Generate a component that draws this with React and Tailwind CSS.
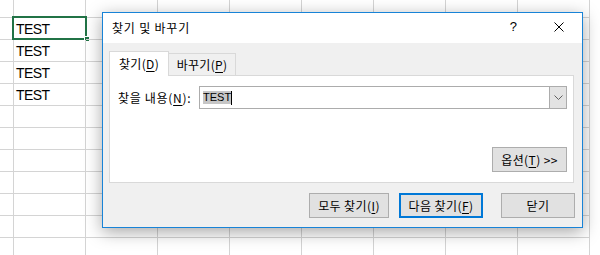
import React from "react";

const KR = { fontFamily: '"Noto Sans CJK KR", "Noto Sans", sans-serif' };

function U({ children }) {
  return <span className="underline underline-offset-[2px] decoration-[1px]">{children}</span>;
}

function Grid() {
  const rows = Array.from({ length: 12 }, (_, i) => i);
  const cols = Array.from({ length: 9 }, (_, i) => i);
  return (
    <div className="flex flex-col bg-white" style={{ fontFamily: '"Liberation Sans", Arial, sans-serif' }}>
      {rows.map((r) => (
        <div key={r} className={`flex ${r === 0 ? "h-[18px]" : "h-[22px]"}`}>
          {cols.map((c) => (
            <div
              key={c}
              className={`relative shrink-0 border-r border-b border-[#d4d4d4] ${c === 0 ? "w-[14px]" : "w-[72px]"} flex items-end pl-[2px] pb-[2px]`}
            >
              {c === 1 && r >= 1 && r <= 4 && (
                <span className="text-[14px] leading-[16px] tracking-[-0.6px] text-black">TEST</span>
              )}
              {c === 1 && r === 1 && (
                <>
                  <div className="absolute -left-[2px] -top-[2px] w-[75px] h-[24px] border-2 border-[#217346] pointer-events-none" />
                  <div className="absolute left-[70px] top-[18px] w-[6px] h-[6px] bg-[#217346] border border-white" />
                </>
              )}
            </div>
          ))}
        </div>
      ))}
    </div>
  );
}

function Btn({ w, primary, children }) {
  return (
    <div
      className={`h-[25px] ${w} flex items-center justify-center bg-[#e1e1e1] text-[12px] leading-[16px] tracking-[0.4px] text-black ${
        primary ? "border-2 border-[#0078d7]" : "border border-[#adadad]"
      }`}
      style={KR}
    >
      {children}
    </div>
  );
}

export default function App() {
  return (
    <div className="relative w-[600px] h-[255px] overflow-hidden bg-white">
      <Grid />
      <div
        className="absolute left-[102px] top-[12px] w-[481px] h-[216px] border border-[#1883d7] flex flex-col shadow-[0_4px_16px_rgba(0,0,0,0.35)]"
        style={KR}
      >
        {/* title bar */}
        <div className="h-[30px] bg-white flex items-center">
          <span className="pl-[9px] text-[12px] leading-[16px] tracking-[0.8px] text-black">찾기 및 바꾸기</span>
          <span
            className="ml-auto mr-[37px] text-[13px] leading-[16px] text-black -mt-[2px]"
            style={{ fontFamily: '"Liberation Sans", Arial, sans-serif' }}
          >
            ?
          </span>
          <svg width="10" height="10" viewBox="0 0 10 10" className="mr-[18px] -mt-[2px]">
            <path d="M0.5 0.5 L9.5 9.5 M9.5 0.5 L0.5 9.5" stroke="#000" strokeWidth="1" />
          </svg>
        </div>
        {/* body */}
        <div className="flex-1 bg-[#f0f0f0] pt-[8px] pl-[6px] pr-[8px] flex flex-col">
          {/* tabs */}
          <div className="flex items-end">
            <div className="relative z-10 -mb-px h-[25px] w-[60px] bg-white border-t border-l border-r border-[#d9d9d9] flex items-center justify-center text-[12px] leading-[16px] tracking-[0.3px] text-black pb-[1px]">
              찾기(<U>D</U>)
            </div>
            <div className="h-[22px] w-[67px] bg-[#f0f0f0] border-t border-r border-[#d9d9d9] flex items-center justify-center text-[12px] leading-[16px] tracking-[0.3px] text-black">
              바꾸기(<U>P</U>)
            </div>
          </div>
          {/* panel */}
          <div className="w-[465px] h-[108px] bg-white border border-[#d9d9d9] pt-[10px] pl-[8px] pr-[6px] flex flex-col">
            <div className="flex items-center">
              <span className="w-[81px] shrink-0 text-[12px] leading-[16px] tracking-[0.7px] text-black">
                찾을 내용(<U>N</U>):
              </span>
              <div className="flex-1 h-[23px] border border-[#acacac] bg-white flex items-stretch">
                <div className="flex-1 flex items-center pl-[3px]">
                  <span
                    className="bg-[#c6c6c6] text-[11px] leading-[13px] text-black"
                    style={{ fontFamily: '"Liberation Sans", Arial, sans-serif' }}
                  >
                    TEST
                  </span>
                  <span className="w-px h-[14px] bg-black" />
                </div>
                <div className="w-[17px] border-l border-[#acacac] bg-[#e3e3e3] flex items-center justify-center">
                  <svg width="9" height="5" viewBox="0 0 9 5">
                    <path d="M0.5 0.5 L4.5 4.5 L8.5 0.5" fill="none" stroke="#606060" strokeWidth="1" />
                  </svg>
                </div>
              </div>
            </div>
            <div className="flex justify-end mt-[38px]">
              <Btn w="w-[75px]">
                옵션(<U>T</U>)&nbsp;&gt;&gt;
              </Btn>
            </div>
          </div>
          {/* bottom buttons */}
          <div className="flex justify-end mt-[10px] -mr-px">
            <Btn w="w-[80px]">
              모두 찾기(<U>I</U>)
            </Btn>
            <div className="w-[10px]" />
            <Btn w="w-[84px]" primary>
              다음 찾기(<U>F</U>)
            </Btn>
            <div className="w-[18px]" />
            <Btn w="w-[74px]">닫기</Btn>
          </div>
        </div>
      </div>
    </div>
  );
}
